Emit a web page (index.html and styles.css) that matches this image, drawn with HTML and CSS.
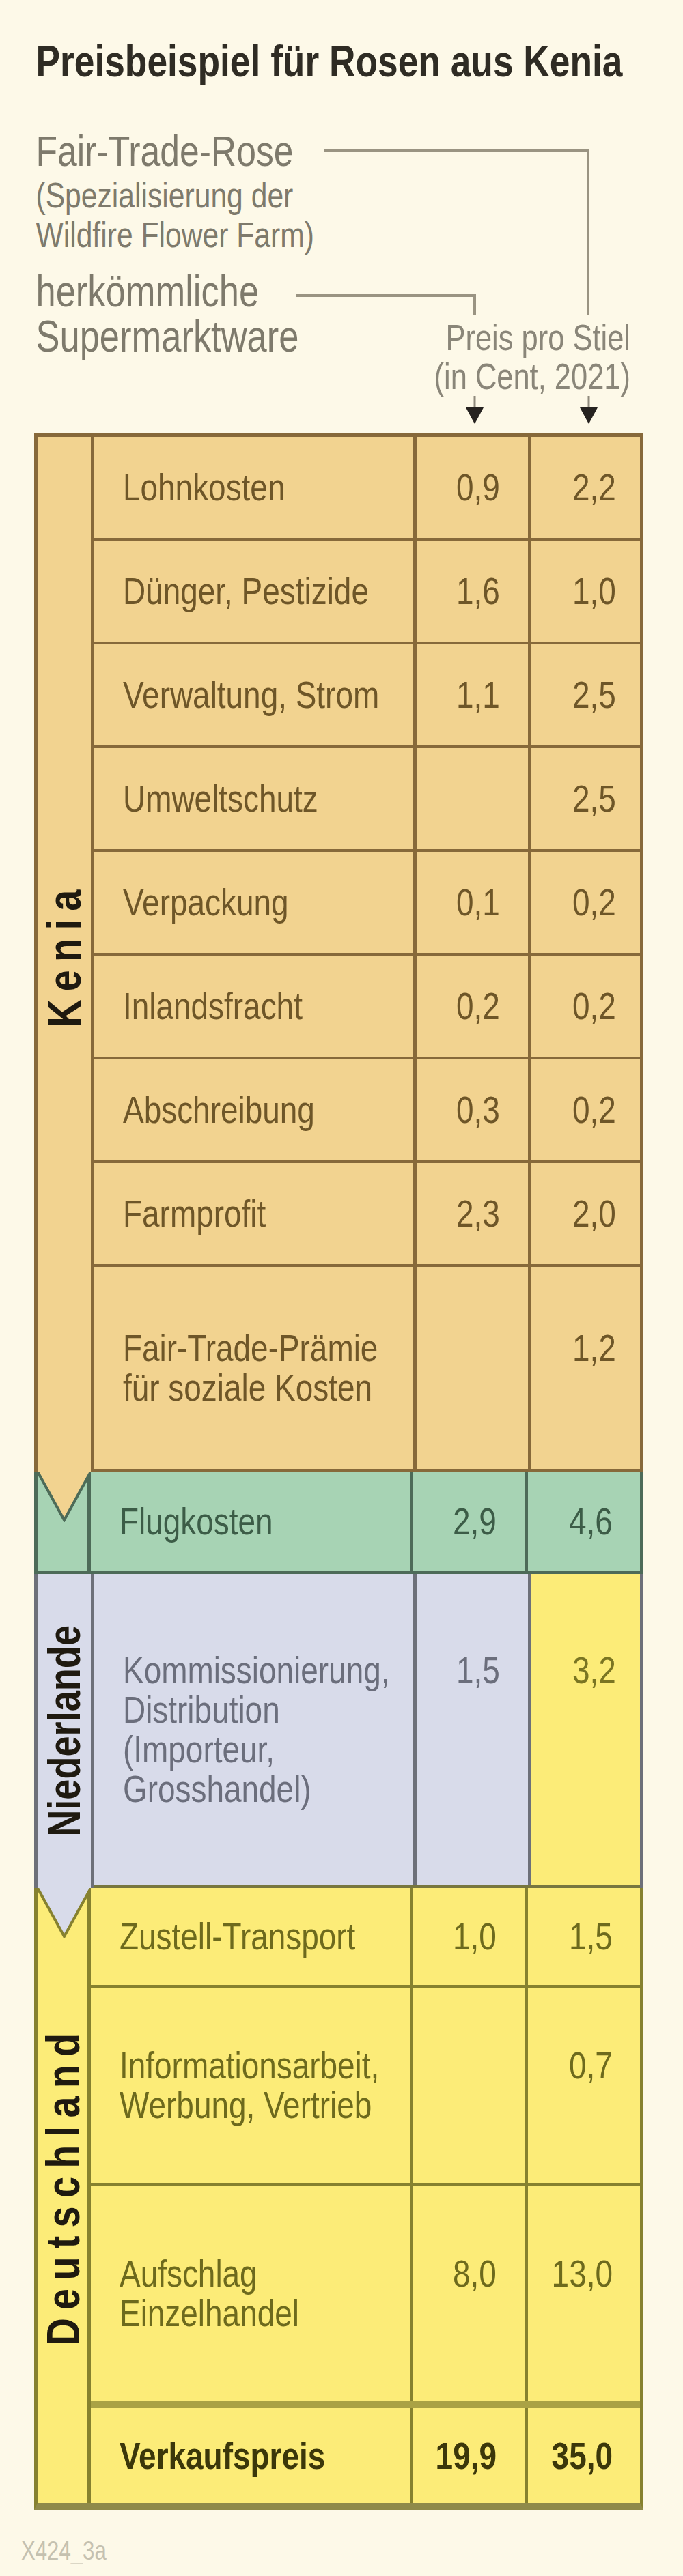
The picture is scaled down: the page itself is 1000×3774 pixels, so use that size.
FILE: index.html
```html
<!DOCTYPE html>
<html lang="de">
<head>
<meta charset="utf-8">
<title>Preisbeispiel für Rosen aus Kenia</title>
<link rel="stylesheet" href="styles.css">
</head>
<body>
<div class="chart">
  <h1 class="title">Preisbeispiel für Rosen aus Kenia</h1>

  <div class="legend">
    <div class="legend-left">
      <p class="key-fair">Fair-Trade-Rose</p>
      <p class="key-note">(Spezialisierung der<br>Wildfire Flower Farm)</p>
      <p class="key-conv">herkömmliche<br>Supermarktware</p>
    </div>
    <div class="legend-right">
      <p class="unit">Preis pro Stiel<br>(in Cent, 2021)</p>
      <div class="pointer-space"></div>
    </div>
    <svg class="connectors" width="892" height="432" viewBox="0 0 892 432" aria-hidden="true">
      <path class="conn" d="M425 31 H811 V272"/>
      <path class="conn" d="M384 243 H645 V272"/>
      <path class="stem" d="M645 390 V410 M812 390 V410"/>
      <polygon class="head" points="632,407 658,407 645,431"/>
      <polygon class="head" points="799,407 825,407 812,431"/>
    </svg>
  </div>

  <div class="table">
    <section class="group kenia">
      <div class="label">
        <span class="vlabel spaced">Kenia</span>
        <svg class="tip" width="78" height="74" viewBox="0 0 78 74" aria-hidden="true">
          <polygon class="tip-fill" points="0,0 78,0 39,71"/>
          <polyline class="tip-edge" points="0,0 39,71 78,0"/>
        </svg>
      </div>
      <div class="rows">
        <div class="row"><div class="item"><span>Lohnkosten</span></div><div class="num"><span>0,9</span></div><div class="num n2"><span>2,2</span></div></div>
        <div class="row"><div class="item"><span>Dünger, Pestizide</span></div><div class="num"><span>1,6</span></div><div class="num n2"><span>1,0</span></div></div>
        <div class="row"><div class="item"><span>Verwaltung, Strom</span></div><div class="num"><span>1,1</span></div><div class="num n2"><span>2,5</span></div></div>
        <div class="row"><div class="item"><span>Umweltschutz</span></div><div class="num"></div><div class="num n2"><span>2,5</span></div></div>
        <div class="row"><div class="item"><span>Verpackung</span></div><div class="num"><span>0,1</span></div><div class="num n2"><span>0,2</span></div></div>
        <div class="row"><div class="item"><span>Inlandsfracht</span></div><div class="num"><span>0,2</span></div><div class="num n2"><span>0,2</span></div></div>
        <div class="row"><div class="item"><span>Abschreibung</span></div><div class="num"><span>0,3</span></div><div class="num n2"><span>0,2</span></div></div>
        <div class="row"><div class="item"><span>Farmprofit</span></div><div class="num"><span>2,3</span></div><div class="num n2"><span>2,0</span></div></div>
        <div class="row row-premium"><div class="item"><span>Fair-Trade-Prämie<br>für soziale Kosten</span></div><div class="num up1"></div><div class="num n2 up1"><span>1,2</span></div></div>
      </div>
    </section>

    <section class="group flug">
      <div class="label"></div>
      <div class="rows">
        <div class="row"><div class="item"><span>Flugkosten</span></div><div class="num"><span>2,9</span></div><div class="num n2"><span>4,6</span></div></div>
      </div>
    </section>

    <section class="group nl">
      <div class="label">
        <span class="vlabel">Niederlande</span>
        <svg class="tip" width="78" height="74" viewBox="0 0 78 74" aria-hidden="true">
          <polygon class="tip-fill" points="0,0 78,0 39,71"/>
          <polyline class="tip-edge" points="0,0 39,71 78,0"/>
        </svg>
      </div>
      <div class="rows">
        <div class="row"><div class="item"><span>Kommissionierung,<br>Distribution<br>(Importeur,<br>Grosshandel)</span></div><div class="num up3"><span>1,5</span></div><div class="num n2 up3 yellow"><span>3,2</span></div></div>
      </div>
    </section>

    <section class="group de">
      <div class="label label-de">
        <span class="vlabel spaced">Deutschland</span>
      </div>
      <div class="rows">
        <div class="row row-delivery"><div class="item"><span>Zustell-Transport</span></div><div class="num"><span>1,0</span></div><div class="num n2"><span>1,5</span></div></div>
        <div class="row row-info"><div class="item"><span>Informationsarbeit,<br>Werbung, Vertrieb</span></div><div class="num up1"></div><div class="num n2 up1"><span>0,7</span></div></div>
        <div class="row row-markup"><div class="item"><span>Aufschlag<br>Einzelhandel</span></div><div class="num up1"><span>8,0</span></div><div class="num n2 up1"><span>13,0</span></div></div>
        <div class="row row-total"><div class="item"><span>Verkaufspreis</span></div><div class="num"><span>19,9</span></div><div class="num n2"><span>35,0</span></div></div>
      </div>
    </section>
  </div>
</div>
<p class="code">X424_3a</p>
</body>
</html>
```

FILE: styles.css
```css
html, body {
  margin: 0;
  padding: 0;
  background: #fdf9e8;
}

body {
  font-family: "Liberation Sans", Arial, sans-serif;
}

.chart {
  width: 892px;
  margin-left: 50px;
}

/* ---------- title ---------- */
.title {
  margin: 57px 0 0;
  padding-left: 3px;
  font-size: 65px;
  line-height: 65px;
  font-weight: bold;
  color: #2f2c24;
  white-space: nowrap;
  transform: scaleX(0.82);
  transform-origin: 0 0;
}

/* ---------- legend ---------- */
.legend {
  position: relative;
  display: grid;
  grid-template-columns: 1fr 400px;
  height: 432px;
  margin-top: 68px;
}

.legend p {
  margin: 0;
  white-space: nowrap;
}

.legend-left {
  align-self: start;
  padding-left: 3px;
  color: #7e7a6c;
  transform: scaleX(0.82);
  transform-origin: 0 0;
}

.key-fair {
  font-size: 63px;
  line-height: 63px;
}

.legend .key-note {
  margin-top: 4px;
  font-size: 52px;
  line-height: 58px;
}

.legend .key-conv {
  margin-top: 21px;
  font-size: 64px;
  line-height: 66px;
}

.legend-right {
  align-self: end;
  padding-right: 27px;
  text-align: right;
  color: #8a8679;
}

.unit {
  font-size: 53px;
  line-height: 57px;
  transform: scaleX(0.82);
  transform-origin: 100% 0;
}

.pointer-space {
  height: 42px;
}

.connectors {
  position: absolute;
  left: 0;
  top: 0;
  pointer-events: none;
}

.conn {
  fill: none;
  stroke: #9a9482;
  stroke-width: 4;
}

.stem {
  fill: none;
  stroke: #8f8a7c;
  stroke-width: 3;
}

.head {
  fill: #262320;
}

/* ---------- table ---------- */
.table {
  margin-top: 13px;
  width: 892px;
}

.group {
  display: flex;
  border-left: 5px solid var(--bc);
  border-right: 5px solid var(--bc);
  background: var(--bg);
  color: var(--tc);
}

.kenia {
  --bg: #f2d390;
  --bc: #87693a;
  --tc: #6e5628;
  --tip-edge: #4d6b58;
  border-top: 5px solid var(--bc);
}

.flug {
  --bg: #a7d3b4;
  --bc: #4d6b58;
  --tc: #3c5c47;
}

.nl {
  --bg: #d8dbea;
  --bc: #6d7079;
  --tc: #6b6e7c;
  --tip-edge: #86812f;
}

.de {
  --bg: #fcec78;
  --bc: #86812f;
  --tc: #6d6a1d;
  border-bottom: 10px solid #8f8a4a;
}

.label {
  position: relative;
  width: 78px;
  flex: none;
  border-right: 5px solid var(--bc);
  display: flex;
  align-items: center;
  justify-content: center;
}

.flug .label {
  box-sizing: border-box;
  border-bottom: 4px solid var(--bc);
}

.label-de {
  box-sizing: border-box;
  padding-bottom: 30px;
}

.vlabel {
  writing-mode: vertical-rl;
  transform: rotate(180deg) scaleY(0.82);
  font-size: 66px;
  line-height: 78px;
  font-weight: bold;
  color: #1f1a10;
  white-space: nowrap;
}

.vlabel.spaced {
  font-size: 68px;
  letter-spacing: 15px;
}

.tip {
  position: absolute;
  left: 0;
  top: 100%;
  z-index: 2;
}

.tip-fill {
  fill: var(--bg);
}

.tip-edge {
  fill: none;
  stroke: var(--tip-edge);
  stroke-width: 4;
}

.rows {
  flex: 1;
}

.row {
  box-sizing: border-box;
  display: grid;
  grid-template-columns: 467px 168px 164px;
  height: 152px;
  border-bottom: 4px solid var(--bc);
  font-size: 56px;
  line-height: 58px;
}

.row-premium {
  height: 300px;
}

.flug .row {
  height: 150px;
}

.nl .row {
  height: 460px;
  border-bottom-color: #77763f;
}

.row-delivery {
  height: 146px;
}

.row-info {
  height: 290px;
}

.row-markup {
  height: 326px;
  border-bottom: 11px solid #aaa245;
}

.row-total {
  height: 139px;
  border-bottom: none;
  font-weight: bold;
  color: #3b370a;
}

.item {
  display: flex;
  align-items: center;
  padding-left: 42px;
  white-space: nowrap;
  min-width: 0;
}

.item span {
  display: inline-block;
  transform: scaleX(0.82);
  transform-origin: 0 50%;
}

.num {
  box-sizing: border-box;
  display: flex;
  align-items: center;
  justify-content: flex-end;
  padding-right: 41px;
  border-left: 5px solid var(--bc);
  white-space: nowrap;
}

.num span {
  display: inline-block;
  transform: scaleX(0.82);
  transform-origin: 100% 50%;
}

.num.n2 {
  padding-right: 35px;
}

.num.up1 {
  padding-bottom: 58px;
}

.num.up3 {
  padding-bottom: 174px;
}

.num.yellow {
  background: #fcec78;
  color: #7a7522;
}

/* ---------- footer code ---------- */
.code {
  margin: 40px 0 0 31px;
  font-size: 38px;
  line-height: 40px;
  color: #c5c1b0;
  transform: scaleX(0.82);
  transform-origin: 0 0;
}
```
